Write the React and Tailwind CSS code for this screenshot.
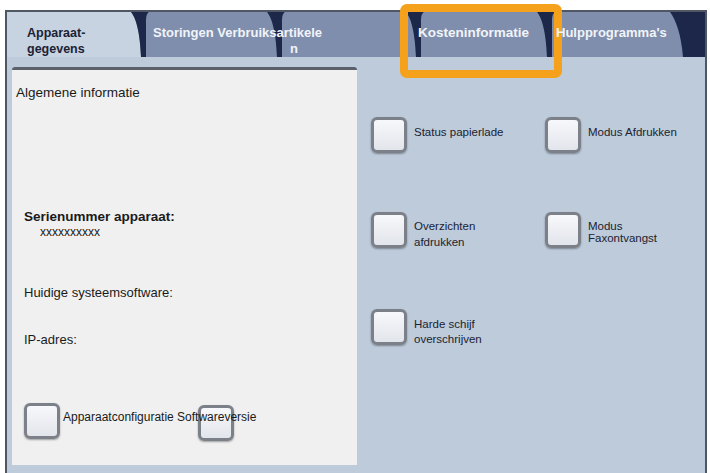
import React from 'react';

const NAVY = '#1d2749';
const SLATE = '#7f8eac';
const LIGHT = '#c7d3e0';

const Curve = ({ prev }) => (
  <svg width="18" height="45" viewBox="0 0 18 45" className="absolute left-0 top-0">
    <path d="M0 0 C5 6 9 20 10 45 L0 45 Z" fill={prev} />
    <path d="M0 0 H18 C15 2 15 6 15 12 V45 H10 C9 20 5 6 0 0 Z" fill={NAVY} />
  </svg>
);

const Box = ({ className = '' }) => (
  <div
    className={
      'w-[36px] h-[36px] shrink-0 rounded-[6px] border-[3px] border-[#7c8089] bg-linear-to-b from-[#f7f8fb] to-[#e2e5eb] shadow-[0_1px_2px_rgba(0,0,0,0.35)] ' +
      className
    }
  />
);

const Option = ({ children, mt = 'mt-[7px]', leading = 'leading-[15px]' }) => (
  <div className="flex items-start gap-[7px]">
    <Box />
    <div className={'text-[11.5px] text-[#1c2230] ' + mt + ' ' + leading}>{children}</div>
  </div>
);

export default function App() {
  return (
    <div className="relative w-[710px] h-[473px] overflow-hidden bg-white font-['Liberation_Sans',Arial,sans-serif]">
      <div className="ml-[5px] mt-[10px] w-[702px] h-[463px] flex flex-col border-t-2 border-l-2 border-r-2 border-[#4f5664]">
        {/* tabs */}
        <div className="flex h-[45px] shrink-0">
          <div className="w-[124px] bg-[#c7d3e0] pl-[20px] pt-[13px] text-[12.5px] leading-[16px] font-bold text-[#1b2236]">
            Apparaat-
            <br />
            gegevens
          </div>
          <div className="relative w-[136px] bg-[#7f8eac]">
            <Curve prev={LIGHT} />
            <div className="relative z-10 pl-[22px] pt-[13px] text-[13px] leading-[16px] font-bold text-[#f1f4f9] whitespace-nowrap">
              <div>Storingen Verbruiksartikele</div>
              <div className="pl-[137px]">n</div>
            </div>
          </div>
          <div className="relative w-[139px] bg-[#7f8eac]">
            <Curve prev={SLATE} />
          </div>
          <div className="relative w-[131px] bg-[#7f8eac]">
            <Curve prev={SLATE} />
            <div className="relative pl-[12px] pt-[13px] text-[13.5px] leading-[16px] font-bold text-[#f1f4f9] whitespace-nowrap">
              Kosteninformatie
            </div>
          </div>
          <div className="relative w-[133px] bg-[#7f8eac]">
            <Curve prev={SLATE} />
            <div className="relative z-10 pl-[19px] pt-[13px] text-[13px] leading-[16px] font-bold text-[#f1f4f9] whitespace-nowrap">
              Hulpprogramma's
            </div>
          </div>
          <div className="relative flex-1 bg-[#1d2749]">
            <svg width="14" height="45" viewBox="0 0 14 45" className="absolute left-0 top-0">
              <path d="M0 0 C6 8 11 22 13 45 H0 Z" fill={SLATE} />
            </svg>
          </div>
        </div>

        {/* content */}
        <div className="flex flex-1 bg-[#bdcbdb] pl-[5px] pt-[10px]">
          <div className="w-[345px] h-[398px] flex flex-col bg-[#f0f0f0] border-t-[3px] border-[#5a616d] rounded-t-[3px] text-[#1a1a1a]">
            <div className="ml-[4px] mt-[15px] text-[13.5px] leading-[16px]">Algemene informatie</div>
            <div className="ml-[12px] mt-[108px] text-[13.5px] leading-[16px] font-bold">Serienummer apparaat:</div>
            <div className="ml-[28px] text-[12px] leading-[14px]">xxxxxxxxxx</div>
            <div className="ml-[12px] mt-[46px] text-[13px] leading-[16px]">Huidige systeemsoftware:</div>
            <div className="ml-[12px] mt-[31px] text-[13px] leading-[16px]">IP-adres:</div>
            <div className="relative mt-[55px] ml-[12px] flex items-start">
              <Box />
              <Box className="ml-[138px] mt-[2px]" />
              <span className="absolute left-[39px] top-[7px] text-[12px] leading-[14px] whitespace-nowrap">
                Apparaatconfiguratie Softwareversie
              </span>
            </div>
          </div>

          <div className="flex-1 pl-[14px] pt-[50px]">
            <div className="grid grid-cols-[174px_1fr] gap-y-[59px]">
              <Option mt="mt-[8px]" leading="leading-[14px]">Status papierlade</Option>
              <Option mt="mt-[8px]" leading="leading-[14px]">Modus Afdrukken</Option>
              <Option mt="mt-[6px]" leading="leading-[16px]">
                Overzichten
                <br />
                afdrukken
              </Option>
              <Option mt="mt-[8px]" leading="leading-[12px]">
                Modus
                <br />
                Faxontvangst
              </Option>
              <Option mt="mt-[8px]" leading="leading-[15px]">
                Harde schijf
                <br />
                overschrijven
              </Option>
            </div>
          </div>
        </div>
      </div>

      {/* highlight */}
      <div className="absolute left-[400px] top-[4px] w-[162px] h-[74px] border-[8px] border-[#f6a11b] rounded-[7px]" />
    </div>
  );
}
